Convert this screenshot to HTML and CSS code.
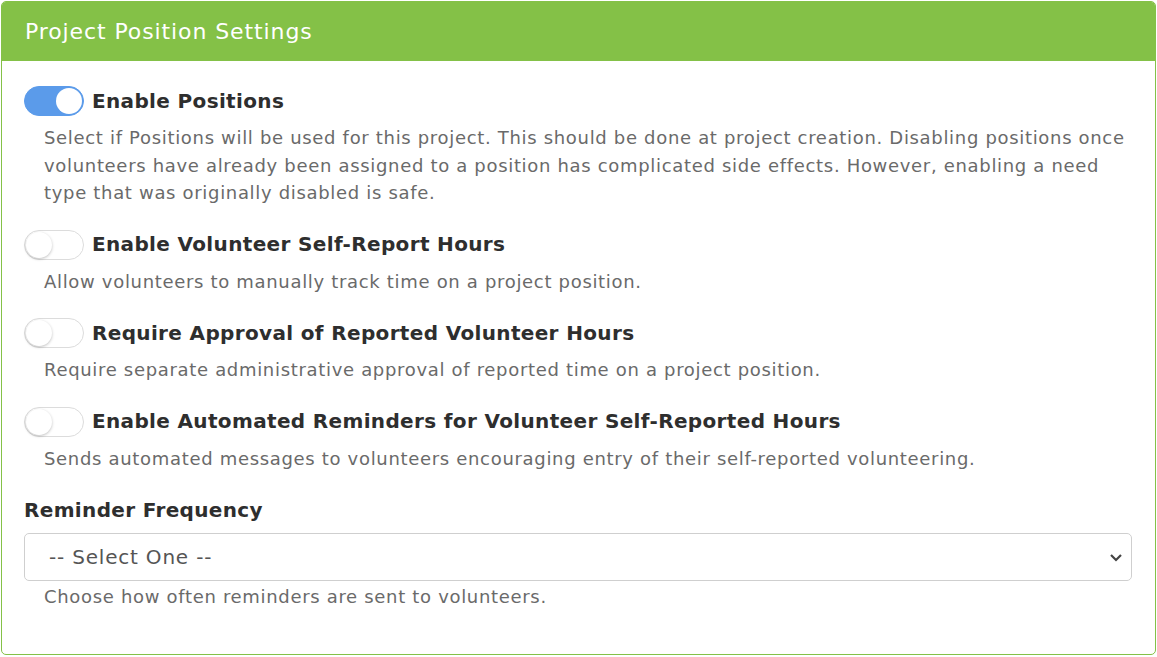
FILE: index.html
```html
<!DOCTYPE html>
<html>

<head>
  <meta charset="UTF-8">
  <title>Project Position Settings</title>
  <link rel="stylesheet" href="styles.css">
</head>

<body>
  <div class="card">
    <div class="card-header">Project Position Settings</div>
    <div class="card-body">

      <div class="setting">
        <label class="row">
          <span class="switch on"><span class="knob"></span></span>
          <span class="label">Enable Positions</span>
        </label>
        <p class="help">Select if Positions will be used for this project. This should be done at project creation. Disabling positions once volunteers have already been assigned to a position has complicated side effects. However, enabling a need type that was originally disabled is safe.</p>
      </div>

      <div class="setting">
        <label class="row">
          <span class="switch"><span class="knob"></span></span>
          <span class="label">Enable Volunteer Self-Report Hours</span>
        </label>
        <p class="help">Allow volunteers to manually track time on a project position.</p>
      </div>

      <div class="setting">
        <label class="row">
          <span class="switch"><span class="knob"></span></span>
          <span class="label">Require Approval of Reported Volunteer Hours</span>
        </label>
        <p class="help">Require separate administrative approval of reported time on a project position.</p>
      </div>

      <div class="setting">
        <label class="row">
          <span class="switch"><span class="knob"></span></span>
          <span class="label">Enable Automated Reminders for Volunteer Self-Reported Hours</span>
        </label>
        <p class="help">Sends automated messages to volunteers encouraging entry of their self-reported volunteering.</p>
      </div>

      <div class="field">
        <div class="field-label">Reminder Frequency</div>
        <div class="select">
          <span>-- Select One --</span>
          <svg width="14" height="10" viewBox="0 0 14 10"><path d="M2 3 L7 8 L12 3" fill="none" stroke="#444" stroke-width="2.2"/></svg>
        </div>
        <p class="help">Choose how often reminders are sent to volunteers.</p>
      </div>

    </div>
  </div>
</body>

</html>
```

FILE: styles.css
```css
body {
  margin: 0;
  padding: 1px;
  background: #fff;
  font-family: "DejaVu Sans", Verdana, sans-serif;
}

.card {
  border: 1px solid #84c147;
  border-radius: 5px;
  overflow: hidden;
  height: 654px;
  box-sizing: border-box;
}

.card-header {
  background: #84c147;
  color: #fff;
  font-size: 22px;
  letter-spacing: 0.9px;
  height: 59px;
  line-height: 59px;
  padding-left: 23px;
}

.card-body {
  padding: 25px 23px 0 22px;
}

.setting {
  margin-bottom: 23px;
}

.row {
  display: flex;
  align-items: center;
  gap: 8px;
}

.switch {
  width: 58px;
  height: 28px;
  border: 1px solid #dcdcdc;
  border-radius: 15px;
  background: #fff;
  position: relative;
  flex-shrink: 0;
}

.switch .knob {
  position: absolute;
  top: 1px;
  left: 1px;
  width: 26px;
  height: 26px;
  border-radius: 50%;
  background: #fff;
  box-shadow: 0 1px 3px rgba(0, 0, 0, 0.25);
}

.switch.on {
  background: #5b9bea;
  border-color: #5b9bea;
}

.switch.on .knob {
  left: 31px;
  box-shadow: none;
}

.label {
  font-weight: bold;
  font-size: 20px;
  letter-spacing: 0.35px;
  line-height: 23px;
  color: #2e2e2e;
}

.help {
  margin: 8px 0 0 20px;
  font-size: 18px;
  letter-spacing: 0.68px;
  line-height: 27.5px;
  color: #6a6a6a;
}

.field {
  margin-top: 27px;
}

.field-label {
  font-weight: bold;
  font-size: 20px;
  letter-spacing: 0.35px;
  line-height: 23px;
  color: #2e2e2e;
  margin-bottom: 11px;
}

.select {
  height: 48px;
  border: 1px solid #cfcfcf;
  border-radius: 5px;
  box-sizing: border-box;
  display: flex;
  align-items: center;
  justify-content: space-between;
  padding: 0 8px 0 24px;
  font-size: 20px;
  letter-spacing: 0.8px;
  color: #555;
}

.field .help {
  margin-top: 2px;
}
```
